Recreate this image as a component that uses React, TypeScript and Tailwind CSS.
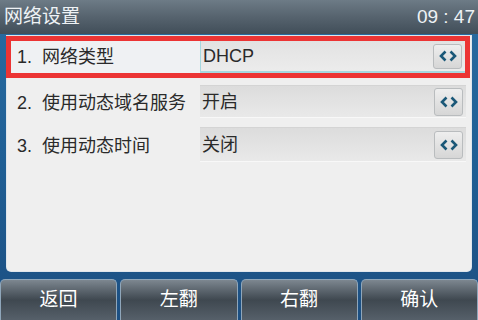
import React from "react";

const FONT = { fontFamily: '"Liberation Sans", "Noto Sans CJK SC", sans-serif' };

function Arrows() {
  return (
    <svg width="18" height="12" viewBox="0 0 18 12" fill="none">
      <path d="M6.5 1.5 L2 6 L6.5 10.5" stroke="#1b5878" strokeWidth="2.6" strokeLinejoin="miter" />
      <path d="M11.5 1.5 L16 6 L11.5 10.5" stroke="#1b5878" strokeWidth="2.6" strokeLinejoin="miter" />
    </svg>
  );
}

function SwitchButton({ tall }: { tall?: boolean }) {
  return (
    <div
      className={`mr-[3px] flex w-[29px] items-center justify-center rounded-[3px] border border-[#b9bcbe] bg-gradient-to-b from-[#eeeeee] to-[#d6d6d6] ${
        tall ? "h-[28px]" : "h-[25px]"
      }`}
    >
      <Arrows />
    </div>
  );
}

const rows = [
  { label: "2.  使用动态域名服务", value: "开启", h: "h-[33px]", mt: "mt-[7px]" },
  { label: "3.  使用动态时间", value: "关闭", h: "h-[35px]", mt: "mt-[9px]" },
];

const keys = ["返回", "左翻", "右翻", "确认"];

export default function App() {
  return (
    <div
      style={FONT}
      className="flex h-[320px] w-[478px] flex-col overflow-hidden bg-gradient-to-b from-[#2a6ca1] via-[#1f5f95] to-[#1c4f82]"
    >
      {/* Title bar */}
      <div className="flex h-[34px] items-center justify-between bg-gradient-to-b from-[#6d7b86] via-[#56636e] to-[#414e59] pl-[4px] pr-[3px] text-[19px] text-[#eef2f5]">
        <span>网络设置</span>
        <span>09 : 47</span>
      </div>

      {/* Settings panel */}
      <div className="mx-[7px] mt-[2px] h-[235px] rounded-b-[4px] bg-[#efefef] shadow-[0_0_0_1px_#dfe6ec]">
        {/* Selected row */}
        <div className="-ml-[1px] flex h-[42px] w-[464px] border-[5px] border-[#ec3434] text-[18px] text-[#2a2a2a]">
          <div className="flex w-[189px] items-center whitespace-pre bg-[#eff1f3] pl-[6px] pt-[1px]">1.  网络类型</div>
          <div className="flex flex-1 items-center justify-between border-b-2 border-l border-[#a6d8df] bg-gradient-to-b from-[#e2e2e2] to-[#ececec] pl-[2px]">
            <span>DHCP</span>
            <SwitchButton />
          </div>
        </div>

        {rows.map((r) => (
          <div key={r.label} className={`flex ${r.mt} pl-[4px] pr-[5px] text-[18px] text-[#2a2a2a]`}>
            <div className="flex w-[189px] items-center whitespace-pre pl-[6px] pt-[3px]">{r.label}</div>
            <div
              className={`flex flex-1 items-center justify-between border-b border-t border-b-[#f8f8f8] border-t-[#d4d4d4] bg-gradient-to-b from-[#dcdcdc] to-[#e9e9e9] pl-[2px] ${r.h}`}
            >
              <span className="pt-[2px]">{r.value}</span>
              <SwitchButton tall />
            </div>
          </div>
        ))}
      </div>

      {/* Soft keys */}
      <div className="mt-auto flex h-[41px] gap-[3px]">
        {keys.map((k) => (
          <div
            key={k}
            className="flex flex-1 items-center justify-center rounded-t-[5px] border border-b-0 border-[#8fa6ba] bg-gradient-to-b from-[#7d8790] via-[#3f4850] to-[#56606a] text-[19px] text-white"
          >
            {k}
          </div>
        ))}
      </div>
    </div>
  );
}
